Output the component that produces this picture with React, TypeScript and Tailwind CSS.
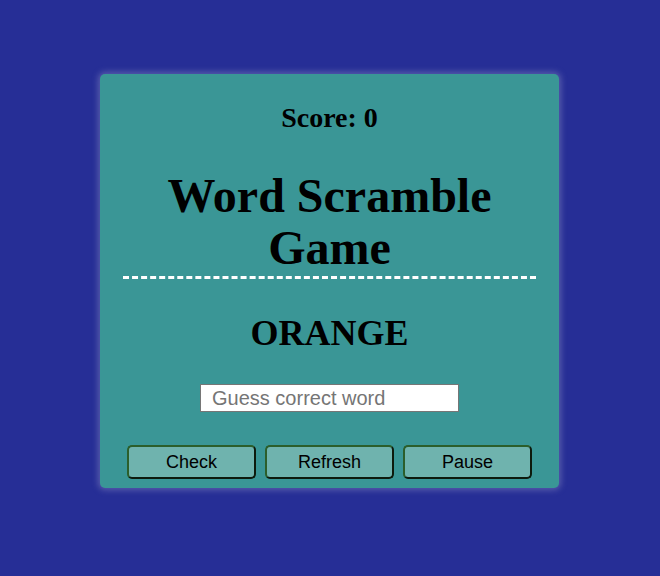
import React from "react";

export default function App() {
  const btn =
    "w-[129px] h-[34px] rounded-[5px] bg-[#6fb3ae] border-2 border-solid border-t-[#2b5e2b] border-l-[#2b5e2b] border-r-[#0d1a0d] border-b-[#0d1a0d] text-[18px] text-black leading-none font-['Liberation_Sans',Arial,sans-serif]";
  return (
    <div className="min-h-screen w-full bg-[#262e96] pt-[74px] pr-[1px] flex justify-center items-start">
      <div className="w-[459px] rounded-[5px] bg-[#3a9696] pt-[28px] pb-[9px] shadow-[0_0_6px_2px_rgba(150,150,200,0.45)] flex flex-col items-center font-['Liberation_Serif','Times_New_Roman',serif]">
        <div className="text-[28px] font-bold leading-[32px] text-black">Score: 0</div>
        <div className="mt-[36px] w-[413px] text-center text-[48px] font-bold leading-[52px] text-black pb-[2px] border-b-[3px] border-dashed border-white">
          Word Scramble
          <br />
          Game
        </div>
        <div className="mt-[34px] text-[36px] font-bold leading-[40px] text-black">ORANGE</div>
        <input
          type="text"
          placeholder="Guess correct word"
          className="mt-[31px] w-[259px] h-[28px] bg-white border border-solid border-[#767676] pl-[11px] text-[20px] text-black placeholder:text-[#757575] outline-none font-['Liberation_Sans',Arial,sans-serif]"
        />
        <div className="mt-[33px] flex gap-[9px]">
          <button className={btn}>Check</button>
          <button className={btn}>Refresh</button>
          <button className={btn}>Pause</button>
        </div>
      </div>
    </div>
  );
}
